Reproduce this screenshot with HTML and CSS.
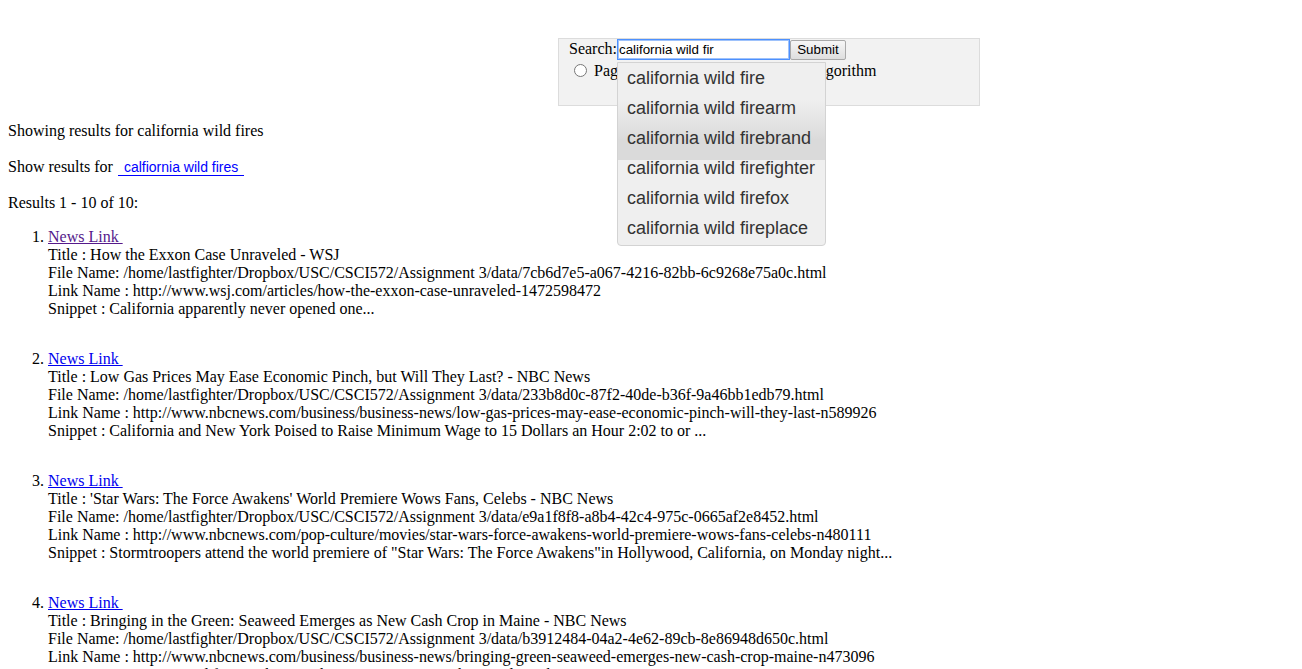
FILE: index.html
```html
<!DOCTYPE html>
<html>
<head>
<meta charset="utf-8">
<title>Search</title>
<link rel="stylesheet" href="styles.css">
</head>
<body>
<form class="search-box">
  <div class="search-row">
    <label class="search-label" for="q">Search:</label><input id="q" class="search-input" type="text" value="california wild fir"><button class="submit-btn" type="button">Submit</button>
  </div>
  <div class="radio-row">
    <input class="radio" type="radio" name="algo"> PageRank<input class="radio radio-second" type="radio" name="algo"> Solr Lucene Default Algorithm
  </div>
  <ul class="suggest">
    <li class="suggest-item">california wild fire</li>
    <li class="suggest-item">california wild firearm</li>
    <li class="suggest-item active">california wild firebrand</li>
    <li class="suggest-item">california wild firefighter</li>
    <li class="suggest-item">california wild firefox</li>
    <li class="suggest-item">california wild fireplace</li>
  </ul>
</form>

<p class="line">Showing results for california wild fires</p>
<p class="line">Show results for <a class="spell" href="#">calfiornia wild fires</a></p>
<p class="line">Results 1 - 10 of 10:</p>

<ol class="results">
  <li class="result">
    <a class="news visited" href="#">News Link&nbsp;</a><br>
    Title : How the Exxon Case Unraveled - WSJ<br>
    File Name: /home/lastfighter/Dropbox/USC/CSCI572/Assignment 3/data/7cb6d7e5-a067-4216-82bb-6c9268e75a0c.html<br>
    Link Name : http://www.wsj.com/articles/how-the-exxon-case-unraveled-1472598472<br>
    Snippet : California apparently never opened one...
  </li>
  <li class="result">
    <a class="news" href="#">News Link&nbsp;</a><br>
    Title : Low Gas Prices May Ease Economic Pinch, but Will They Last? - NBC News<br>
    File Name: /home/lastfighter/Dropbox/USC/CSCI572/Assignment 3/data/233b8d0c-87f2-40de-b36f-9a46bb1edb79.html<br>
    Link Name : http://www.nbcnews.com/business/business-news/low-gas-prices-may-ease-economic-pinch-will-they-last-n589926<br>
    Snippet : California and New York Poised to Raise Minimum Wage to 15 Dollars an Hour 2:02 to or ...
  </li>
  <li class="result">
    <a class="news" href="#">News Link&nbsp;</a><br>
    Title : 'Star Wars: The Force Awakens' World Premiere Wows Fans, Celebs - NBC News<br>
    File Name: /home/lastfighter/Dropbox/USC/CSCI572/Assignment 3/data/e9a1f8f8-a8b4-42c4-975c-0665af2e8452.html<br>
    Link Name : http://www.nbcnews.com/pop-culture/movies/star-wars-force-awakens-world-premiere-wows-fans-celebs-n480111<br>
    Snippet : Stormtroopers attend the world premiere of "Star Wars: The Force Awakens"in Hollywood, California, on Monday night...
  </li>
  <li class="result">
    <a class="news" href="#">News Link&nbsp;</a><br>
    Title : Bringing in the Green: Seaweed Emerges as New Cash Crop in Maine - NBC News<br>
    File Name: /home/lastfighter/Dropbox/USC/CSCI572/Assignment 3/data/b3912484-04a2-4e62-89cb-8e86948d650c.html<br>
    Link Name : http://www.nbcnews.com/business/business-news/bringing-green-seaweed-emerges-new-cash-crop-maine-n473096<br>
    Snippet : Maine seaweed farmers harvest the green as a new cash crop along the coast...
  </li>
</ol>
</body>
</html>
```

FILE: styles.css
```css
html, body {
  margin: 0;
  padding: 0;
}
body {
  margin: 8px;
  font-family: "Liberation Serif", "Times New Roman", serif;
  font-size: 16px;
  line-height: 18px;
  color: #000;
  background: #fff;
}
.search-box {
  position: relative;
  width: 410px;
  height: 66px;
  margin: 30px 0 0 550px;
  padding: 0 0 0 10px;
  background: #f2f2f2;
  border: 1px solid #dcdcdc;
  box-sizing: content-box;
}
.search-row {
  display: flex;
  align-items: center;
  height: 21px;
}
.search-label {
  display: inline-block;
  line-height: 18px;
  margin-top: -2px;
}
.search-input {
  width: 173px;
  height: 21px;
  box-sizing: border-box;
  margin: 0;
  padding: 1px 1px;
  border: 1px solid #4d90fe;
  outline: 1px solid #9ec2fb;
  outline-offset: -2px;
  font-family: "Liberation Sans", Arial, sans-serif;
  font-size: 13.33px;
  color: #000;
  background: #fff;
}
.submit-btn {
  width: 56px;
  height: 20px;
  margin: 0;
  padding: 0;
  border: 1px solid #a9a9a9;
  border-radius: 2px;
  background: linear-gradient(#f6f6f6, #dedede);
  font-family: "Liberation Sans", Arial, sans-serif;
  font-size: 13.33px;
  color: #000;
}
.radio-row {
  margin-top: 2px;
  line-height: 18px;
  white-space: nowrap;
}
.radio {
  width: 13px;
  height: 13px;
  margin: 0 3px 0 5px;
  vertical-align: -1px;
}
.radio-second {
  margin-left: 0;
  margin-right: 1px;
}
.suggest {
  position: absolute;
  left: 58px;
  top: 23px;
  z-index: 10;
  width: 209px;
  margin: 0;
  padding: 0 0 2px 0;
  box-sizing: border-box;
  list-style: none;
  background: #efefef;
  border: 1px solid #d3d3d3;
  border-radius: 0 0 4px 4px;
  font-family: "Liberation Sans", Arial, sans-serif;
  font-size: 18px;
  color: #333;
}
.suggest-item {
  position: relative;
  height: 30px;
  line-height: 30px;
  padding: 0 9px;
  white-space: nowrap;
}
.suggest-item.active::before {
  content: "";
  position: absolute;
  left: 0;
  right: 0;
  top: -23px;
  bottom: -7px;
  z-index: -1;
  background: linear-gradient(#efefef 0, #e0e0e0 30px, #dadada 40px, #dadada 100%);
}
.line {
  margin: 16px 0;
}
.spell {
  display: inline-block;
  padding: 3px 6px 0 6px;
  margin: 0 0 2px 1px;
  line-height: 16px;
  border-bottom: 1px solid #0000ff;
  color: #0000ff;
  text-decoration: none;
  font-family: "Liberation Sans", Arial, sans-serif;
  font-size: 14px;
}
.results {
  margin: 16px 0 0 0;
  padding-left: 40px;
}
.result {
  margin-bottom: 32px;
}
.news {
  color: #0000ee;
}
.news.visited {
  color: #551a8b;
}
```
